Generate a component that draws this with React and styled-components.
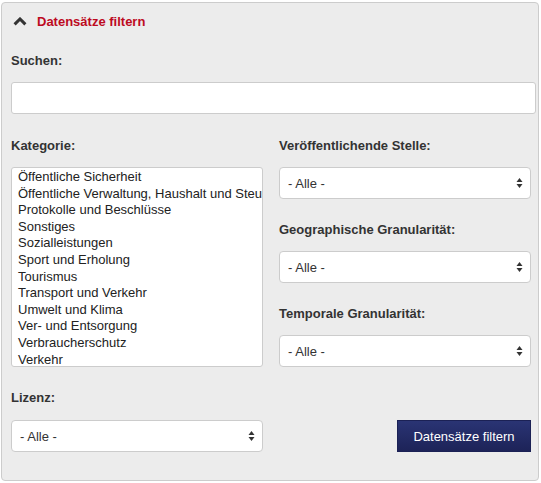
import styled, { createGlobalStyle } from 'styled-components';

const GlobalStyle = createGlobalStyle`
  html, body {
    margin: 0;
    padding: 0;
    background: #ffffff;
  }
  body {
    font-family: "Liberation Sans", Arial, sans-serif;
    font-size: 13px;
    color: #333333;
  }
`;

const categories = [
  'Öffentliche Sicherheit',
  'Öffentliche Verwaltung, Haushalt und Steuern',
  'Protokolle und Beschlüsse',
  'Sonstiges',
  'Sozialleistungen',
  'Sport und Erholung',
  'Tourismus',
  'Transport und Verkehr',
  'Umwelt und Klima',
  'Ver- und Entsorgung',
  'Verbraucherschutz',
  'Verkehr',
];

function Arrows() {
  return (
    <ArrowIcon width="7" height="12" viewBox="0 0 7 12">
      <path d="M3.5 1 L6.5 5 L0.5 5 Z" fill="#333" />
      <path d="M3.5 11 L6.5 7 L0.5 7 Z" fill="#333" />
    </ArrowIcon>
  );
}

function SelectBox() {
  return (
    <SelectWrap>
      <Select defaultValue="">
        <option value="">- Alle -</option>
      </Select>
      <Arrows />
    </SelectWrap>
  );
}

function App() {
  return (
    <Page>
      <GlobalStyle />
      <Panel>
        <Header>
          <svg width="14" height="9" viewBox="0 0 14 9">
            <polyline
              points="1.6,7.4 7,2 12.4,7.4"
              fill="none"
              stroke="#333"
              strokeWidth="3"
            />
          </svg>
          <Title>Datensätze filtern</Title>
        </Header>

        <Field>
          <Label>Suchen:</Label>
          <SearchInput type="text" />
        </Field>

        <Columns>
          <Field>
            <Label>Kategorie:</Label>
            <ListBox>
              {categories.map((c) => (
                <ListItem key={c}>{c}</ListItem>
              ))}
            </ListBox>
          </Field>

          <Stack>
            <Field>
              <Label>Veröffentlichende Stelle:</Label>
              <SelectBox />
            </Field>
            <Field>
              <Label>Geographische Granularität:</Label>
              <SelectBox />
            </Field>
            <Field>
              <Label>Temporale Granularität:</Label>
              <SelectBox />
            </Field>
          </Stack>
        </Columns>

        <BottomRow>
          <Field $gap={14}>
            <Label>Lizenz:</Label>
            <SelectBox />
          </Field>
          <ButtonCell>
            <SubmitButton type="button">Datensätze filtern</SubmitButton>
          </ButtonCell>
        </BottomRow>
      </Panel>
    </Page>
  );
}

export default App;

const Page = styled.div`
  padding: 2px 2px 1px 1px;
`;

const Panel = styled.div`
  width: 538px;
  box-sizing: border-box;
  background: #ececec;
  border: 1px solid #cccccc;
  border-radius: 4px;
  padding: 11px 2px 28px 9px;
  display: flex;
  flex-direction: column;
  gap: 23px;
`;

const Header = styled.div`
  display: flex;
  align-items: center;
  gap: 10px;
  height: 16px;
  padding-left: 2px;

  svg {
    display: block;
    margin-top: -1px;
  }
`;

const Title = styled.span`
  color: #bd0a1f;
  font-weight: bold;
  font-size: 13px;
  line-height: 16px;
`;

const Field = styled.div`
  display: flex;
  flex-direction: column;
  gap: ${(p) => p.$gap || 13}px;
`;

const Label = styled.label`
  font-weight: bold;
  font-size: 13px;
  line-height: 16px;
  color: #333333;
`;

const SearchInput = styled.input`
  box-sizing: border-box;
  width: 525px;
  height: 32px;
  border: 1px solid #cccccc;
  border-radius: 3px;
  background: #ffffff;
  font-family: inherit;
  font-size: 13px;
  padding: 0 8px;
  outline: none;
`;

const Columns = styled.div`
  display: grid;
  grid-template-columns: 252px 252px;
  column-gap: 16px;
  align-items: start;
  margin-top: 1px;
`;

const Stack = styled.div`
  display: flex;
  flex-direction: column;
  gap: 23px;
`;

const ListBox = styled.div`
  box-sizing: border-box;
  height: 200px;
  border: 1px solid #cccccc;
  border-radius: 3px;
  background: #ffffff;
  overflow: hidden;
  padding: 1px 0 0 6px;
`;

const ListItem = styled.div`
  font-size: 13px;
  line-height: 16.6px;
  color: #222222;
  white-space: nowrap;
`;

const SelectWrap = styled.div`
  position: relative;
  width: 252px;
  height: 32px;
`;

const Select = styled.select`
  appearance: none;
  -webkit-appearance: none;
  box-sizing: border-box;
  width: 100%;
  height: 32px;
  border: 1px solid #cccccc;
  border-radius: 4px;
  background: #ffffff;
  font-family: inherit;
  font-size: 13px;
  color: #333333;
  padding: 0 24px 0 8px;
  outline: none;
`;

const ArrowIcon = styled.svg`
  position: absolute;
  right: 8px;
  top: 10px;
  pointer-events: none;
`;

const BottomRow = styled.div`
  display: grid;
  grid-template-columns: 252px 252px;
  column-gap: 16px;
  align-items: end;
`;

const ButtonCell = styled.div`
  display: flex;
  justify-content: flex-end;
`;

const SubmitButton = styled.button`
  width: 134px;
  height: 32px;
  border: 1px solid #1b2155;
  border-radius: 0;
  background: linear-gradient(to bottom, #2a3474, #1d2358);
  color: #ffffff;
  font-family: inherit;
  font-size: 13px;
  cursor: pointer;
`;
